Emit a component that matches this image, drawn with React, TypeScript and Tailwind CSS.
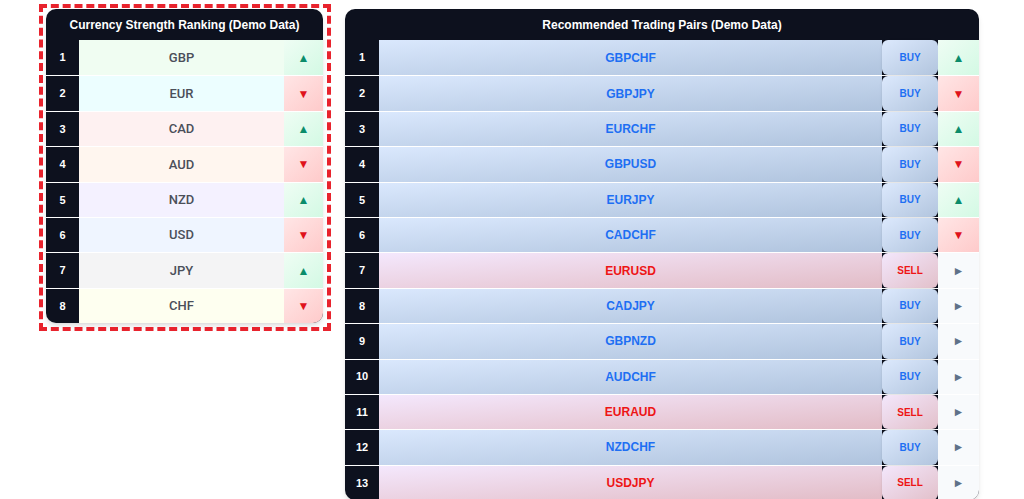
const currencies = [
  { code: 'GBP', bg: 'bg-[#f0fdf2]', up: true },
  { code: 'EUR', bg: 'bg-[#ecfeff]', up: false },
  { code: 'CAD', bg: 'bg-[#fef1f1]', up: true },
  { code: 'AUD', bg: 'bg-[#fff6ef]', up: false },
  { code: 'NZD', bg: 'bg-[#f4f1ff]', up: true },
  { code: 'USD', bg: 'bg-[#eff5ff]', up: false },
  { code: 'JPY', bg: 'bg-[#f4f4f5]', up: true },
  { code: 'CHF', bg: 'bg-[#fefff0]', up: false },
];

const pairs: { pair: string; side: 'BUY' | 'SELL'; trend?: 'up' | 'down' }[] = [
  { pair: 'GBPCHF', side: 'BUY', trend: 'up' },
  { pair: 'GBPJPY', side: 'BUY', trend: 'down' },
  { pair: 'EURCHF', side: 'BUY', trend: 'up' },
  { pair: 'GBPUSD', side: 'BUY', trend: 'down' },
  { pair: 'EURJPY', side: 'BUY', trend: 'up' },
  { pair: 'CADCHF', side: 'BUY', trend: 'down' },
  { pair: 'EURUSD', side: 'SELL' },
  { pair: 'CADJPY', side: 'BUY' },
  { pair: 'GBPNZD', side: 'BUY' },
  { pair: 'AUDCHF', side: 'BUY' },
  { pair: 'EURAUD', side: 'SELL' },
  { pair: 'NZDCHF', side: 'BUY' },
  { pair: 'USDJPY', side: 'SELL' },
];

function Trend({ trend }: { trend?: 'up' | 'down' }) {
  if (trend === 'up') {
    return (
      <div className="flex h-full items-center justify-center bg-linear-to-br from-[#effdf4] to-[#d3f9e4] text-[12px] text-[#0b8c6a]">
        ▲
      </div>
    );
  }
  if (trend === 'down') {
    return (
      <div className="flex h-full items-center justify-center bg-linear-to-br from-[#ffe6e6] to-[#fecaca] text-[12px] text-[#e0121b]">
        ▼
      </div>
    );
  }
  return (
    <div className="flex h-full items-center justify-center bg-[#f8fafc] text-[12px] text-[#5f7189]">
      ►
    </div>
  );
}

export default function App() {
  return (
    <div className="h-[499px] overflow-hidden bg-white font-['Liberation_Sans',Arial,sans-serif]">
      <div className="flex items-start pl-[43px] pt-[8px]">
        <div className="pt-[1px] pl-[3px] pr-[4px] pb-[4px] outline-4 outline-dashed outline-[#e8232d]">
          <div className="w-[277px] overflow-hidden rounded-[10px] bg-[#0d111e] shadow-md">
            <div className="flex h-[31px] items-center justify-center text-[12px] font-bold text-white">
              Currency Strength Ranking (Demo Data)
            </div>
            {currencies.map((c, i) => (
              <div
                key={c.code}
                className={`flex h-[35.4px] ${i > 0 ? 'border-t border-white' : ''}`}
              >
                <div className="flex w-[33px] items-center justify-center text-[11px] font-bold text-white">
                  {i + 1}
                </div>
                <div
                  className={`flex flex-1 items-center justify-center font-['Roboto',sans-serif] text-[13px] font-medium text-[#4b4f59] ${c.bg}`}
                >
                  {c.code}
                </div>
                <div className="w-[39px]">
                  <Trend trend={c.up ? 'up' : 'down'} />
                </div>
              </div>
            ))}
          </div>
        </div>

        <div className="ml-[18px] mt-[1px] w-[634px] overflow-hidden rounded-[10px] bg-[#0d111e] shadow-md">
          <div className="flex h-[31px] items-center justify-center text-[12px] font-bold text-white">
            Recommended Trading Pairs (Demo Data)
          </div>
          {pairs.map((p, i) => {
            const buy = p.side === 'BUY';
            return (
              <div
                key={p.pair}
                className={`flex h-[35.4px] ${i > 0 ? 'border-t border-white' : ''}`}
              >
                <div className="flex w-[34px] items-center justify-center text-[11px] font-bold text-white">
                  {i + 1}
                </div>
                <div
                  className={`flex flex-1 items-center justify-center text-[12px] font-bold ${
                    buy
                      ? 'bg-linear-to-br from-[#dae8fd] to-[#afc3dd] text-[#1e6ff3]'
                      : 'bg-linear-to-br from-[#f4e8fd] to-[#e2bcc6] text-[#ee1515]'
                  }`}
                >
                  {p.pair}
                </div>
                <div
                  className={`flex w-[56px] items-center justify-center rounded-md text-[10px] font-bold shadow-sm ${
                    buy
                      ? 'bg-linear-to-br from-[#dce9fd] to-[#b2c5de] text-[#1e6ff3]'
                      : 'bg-linear-to-br from-[#f3e7fc] to-[#e2c0ca] text-[#ee1515]'
                  }`}
                >
                  {p.side}
                </div>
                <div className="w-[41px]">
                  <Trend trend={p.trend} />
                </div>
              </div>
            );
          })}
        </div>
      </div>
    </div>
  );
}
